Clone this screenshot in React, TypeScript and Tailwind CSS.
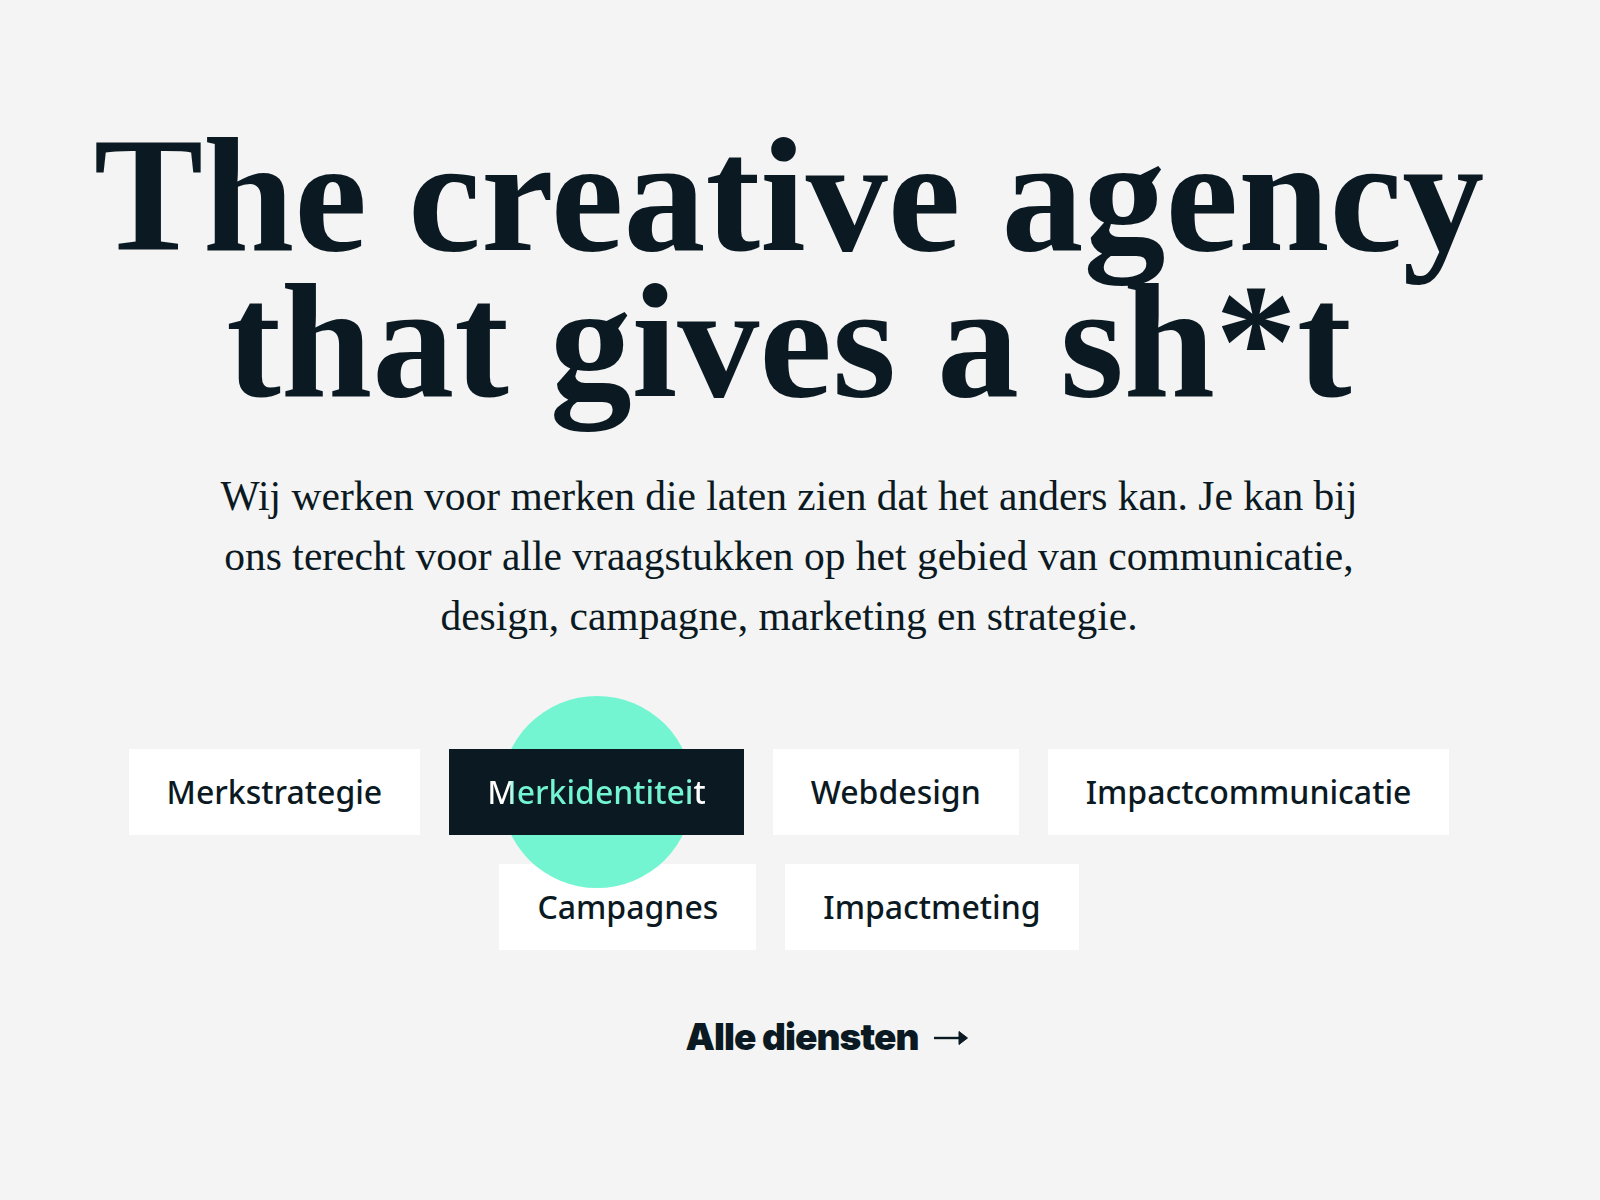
export default function App() {
  const services = [
    ["Merkstrategie", "Merkidentiteit", "Webdesign", "Impactcommunicatie"],
    ["Campagnes", "Impactmeting"],
  ];

  return (
    <div className="min-h-[1200px] bg-[#f4f4f4] pr-[22px] text-[#0b1a22]">
      <section className="flex flex-col items-center pt-[122px]">
        <h1 className="text-center font-['Liberation_Serif',serif] text-[164px] font-bold leading-[146px]">
          The creative agency
          <br />
          that gives a sh*t
        </h1>

        <p className="mt-[52px] max-w-[1170px] text-center font-['Liberation_Serif',serif] text-[41.5px] leading-[60px]">
          Wij werken voor merken die laten zien dat het anders kan. Je kan bij ons terecht voor alle
          vraagstukken op het gebied van communicatie, design, campagne, marketing en strategie.
        </p>

        <div className="mt-[103px] flex flex-col items-center gap-[29px] font-['Noto_Sans',sans-serif]">
          {services.map((row, r) => (
            <div key={r} className="flex justify-center gap-[29px]">
              {row.map((name) =>
                name === "Merkidentiteit" ? (
                  <div key={name} className="relative z-10">
                    {/* hover blob */}
                    <div className="absolute left-1/2 top-1/2 h-[192px] w-[192px] -translate-x-1/2 -translate-y-1/2 rounded-full bg-[#74f5d2]" />
                    <a className="relative flex h-[86px] items-center bg-[#0b1a22] px-[38px] text-[32px] font-medium">
                      <span className="bg-[linear-gradient(90deg,#ffffff_0px,#ffffff_22px,#74f5d2_27px,#74f5d2_202px,#ffffff_207px)] bg-clip-text text-transparent">
                        {name}
                      </span>
                    </a>
                  </div>
                ) : (
                  <a key={name} className="flex h-[86px] items-center bg-white px-[38px] text-[32px] font-medium">
                    {name}
                  </a>
                )
              )}
            </div>
          ))}
        </div>

        <a className="relative ml-[26px] mt-[65px] font-['Inter',sans-serif] text-[37px] font-black leading-[44px] tracking-[-0.025em]">
          Alle diensten
          <svg
            className="absolute left-full top-1/2 ml-[15px] h-[20px] w-[34px] -translate-y-[45%]"
            viewBox="0 0 34 20"
            fill="none"
          >
            <path d="M0 10H27" stroke="currentColor" strokeWidth="2.4" />
            <path d="M25 3.5L33.5 10L25 16.5Z" fill="currentColor" stroke="currentColor" strokeWidth="1" strokeLinejoin="round" />
          </svg>
        </a>
      </section>
    </div>
  );
}
